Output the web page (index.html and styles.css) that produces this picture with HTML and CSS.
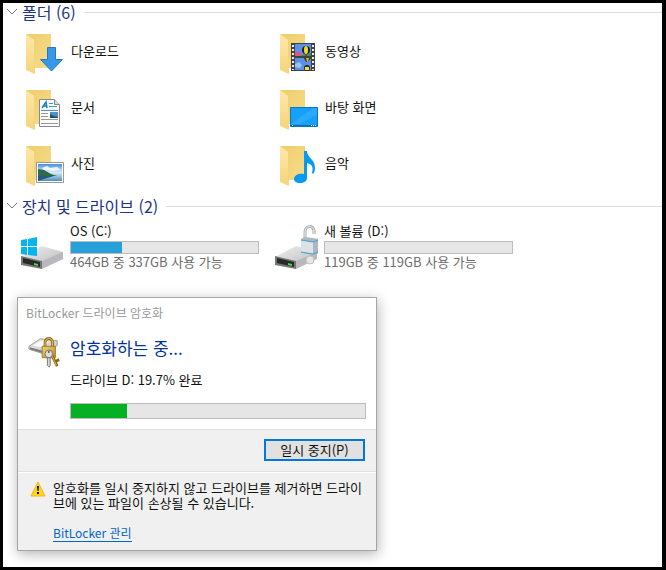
FILE: index.html
```html
<!DOCTYPE html>
<html lang="ko">
<head>
<meta charset="utf-8">
<title>내 PC</title>
<link rel="stylesheet" href="styles.css">
</head>
<body>
<svg class="defs" aria-hidden="true">
  <defs>
    <linearGradient id="back" x1="0" y1="0" x2="1" y2="1"><stop offset="0" stop-color="#efcd6b"/><stop offset="1" stop-color="#f7dc8c"/></linearGradient>
    <linearGradient id="flap" x1="0" y1="0" x2="0" y2="1"><stop offset="0" stop-color="#fde9a9"/><stop offset="1" stop-color="#f5d479"/></linearGradient>
    <linearGradient id="sky" x1="0" y1="0" x2="0" y2="1"><stop offset="0" stop-color="#4a8fe0"/><stop offset="0.5" stop-color="#d6ecf7"/><stop offset="1" stop-color="#4d8fba"/></linearGradient>
    <linearGradient id="metal" x1="0" y1="0" x2="1" y2="1"><stop offset="0" stop-color="#f0f0f0"/><stop offset="1" stop-color="#bcbcc0"/></linearGradient>
    <linearGradient id="gold" x1="0" y1="0" x2="1" y2="1"><stop offset="0" stop-color="#f2d67b"/><stop offset="1" stop-color="#b98719"/></linearGradient>
    <symbol id="folder" viewBox="0 0 40 44">
      <path fill="url(#back)" d="M1 1h25v34H9z"/>
      <path fill="url(#flap)" d="M1 1l8 6v26l1 2v6L1 37z"/>
    </symbol>
    <symbol id="disk" viewBox="0 0 44 48">
      <path fill="url(#metal)" d="M1 34L22 23l21 6-1 4-20 9z"/>
      <path fill="#b9b9bd" d="M22 38l21-9v7l-21 10z"/>
      <path fill="#777" d="M1 33l21 5v8L1 42z"/>
      <path fill="#262b28" d="M3 35l17 4v5L3 40z"/>
      <path fill="#45db4c" d="M14 40l4 1v2l-4-1z"/>
    </symbol>
  </defs>
</svg>
<main class="explorer">
  <section>
    <h2 class="group"><svg class="chevron" viewBox="0 0 12 8"><path d="M1 1l5 5 5-5"/></svg>폴더 (6)</h2>
    <ul class="folders">
      <li class="folder">
        <svg class="folder-icon" viewBox="0 0 40 44"><use href="#folder"/><path fill="#3499ea" stroke="#2677bd" d="M22.500 14.500h8v12h7L26.500 38 15.500 26.500h7z"/></svg>
        <span>다운로드</span>
      </li>
      <li class="folder">
        <svg class="folder-icon" viewBox="0 0 40 44"><use href="#folder"/>
          <path fill="#3f4245" d="M12 10h24v28H12z"/>
          <path stroke="#eee" stroke-width="2" stroke-dasharray="2 2" d="M14 12v25M34 12v25"/>
          <path fill="#5b91e8" d="M16 11h16v12H16zM16 25h16v12H16z"/>
          <path fill="#e9507d" d="M16 20l3-2 5 5h-8z"/><path fill="#2d9b48" d="M21 23l4-2 7-1v3z"/>
          <ellipse cx="27" cy="17" rx="4" ry="4" fill="#202020"/><ellipse cx="27" cy="17" rx="2" ry="4" fill="#f3d735"/><path fill="#9b3c28" d="M26 21h2v2h-2z"/>
          <path fill="#343022" d="M25 25h7l-3 4h-2z"/><path fill="#dcb52b" d="M27 25h3l-1 4h-1z"/>
          <circle cx="28" cy="35" r="3" fill="#272727"/><path fill="#f7dd2d" d="M26 34h4v3h-4z"/><path fill="#9bc3f4" d="M16 31l4-2 3 3-2 3-5-1z"/>
        </svg>
        <span>동영상</span>
      </li>
      <li class="folder">
        <svg class="folder-icon" viewBox="0 0 40 44"><use href="#folder"/>
          <path fill="#fafafa" stroke="#858a8d" d="M14.500 10.500h15l5 5v22h-20z"/><path fill="#ddd" stroke="#858a8d" d="M29.500 10.500v5h5"/>
          <path fill="none" stroke="#187fc0" stroke-width="1.500" d="M17 19l4-6 1 6M18 17h4"/><path stroke="#4696c9" d="M24 14.500h4M24 17.500h8M16 21.500h17"/>
          <path stroke="#999" d="M16 24.500h7M16 27.500h7M16 30.500h17M16 34.500h17"/><path fill="#4d93c8" d="M25 23h8v6h-8z"/><path fill="#23535b" d="M25 25l4 2 4 1v1h-8z"/>
        </svg>
        <span>문서</span>
      </li>
      <li class="folder">
        <svg class="folder-icon" viewBox="0 0 40 44"><use href="#folder"/>
          <path fill="#16a0fa" stroke="#0878bc" d="M11.500 18.500h27v19h-27z"/><path fill="#2ba9fb" d="M12 35L34 19h4v7L20 35z"/><path fill="#086eb2" d="M12 36h26v1H12z"/><path stroke="#e7f6ff" stroke-dasharray="1 1" d="M13 36.500h2M32 36.500h5"/>
        </svg>
        <span>바탕 화면</span>
      </li>
      <li class="folder">
        <svg class="folder-icon" viewBox="0 0 40 44"><use href="#folder"/>
          <path fill="#fff" stroke="#999" d="M11.500 17.500h27v20h-27z"/><path fill="url(#sky)" d="M13 19h24v17H13z"/><path fill="#edf8fc" d="M17 23l5-2 3 2 7-1 4 3-8 1-9-1z"/>
          <path fill="#2f684b" d="M13 24l6 1 7 4 6 2H13z"/><path fill="#285b7b" d="M13 31h16l-7 2-9 3z"/>
        </svg>
        <span>사진</span>
      </li>
      <li class="folder">
        <svg class="folder-icon" viewBox="0 0 40 44"><use href="#folder"/>
          <path fill="#0899f0" d="M25 6h3c0 7 8 8 8 17 0 3-1 5-2 6l-1-1c2-7-1-9-5-10v15c0 3-3 5-7 5-4 0-6-2-6-4 0-4 5-6 10-5z"/>
        </svg>
        <span>음악</span>
      </li>
    </ul>
  </section>
  <section>
    <h2 class="group group-drives"><svg class="chevron" viewBox="0 0 12 8"><path d="M1 1l5 5 5-5"/></svg>장치 및 드라이브 (2)</h2>
    <ul class="drives">
      <li class="drive">
        <svg class="drive-icon" viewBox="0 0 44 48"><use href="#disk"/><path fill="#04b5ef" d="M1 17l6-1v7H1zM8 16l9-2v9H8zM1 24h6v8l-6-1zM8 24h9v9l-9-1z"/></svg>
        <div class="drive-info">
          <label for="drive-c">OS (C:)</label>
          <progress class="meter usage" id="drive-c" value="27.500" max="100"></progress>
          <span class="free">464GB 중 337GB 사용 가능</span>
        </div>
      </li>
      <li class="drive">
        <svg class="drive-icon" viewBox="0 0 44 48"><use href="#disk"/>
          <circle cx="36" cy="37" r="4" fill="#e3e5e7" stroke="#bfc2c5"/><path fill="none" stroke="#aab0b5" stroke-width="3" d="M31 15V9c0-7 9-7 9-1v3"/><path fill="none" stroke="#eef1f3" d="M31 15V9c0-7 9-7 9-1v3"/>
          <path fill="#aeb6c0" d="M27 16l4-2 14 2v14l-5 2-13-2z"/><path fill="#dde2e8" d="M27 17l12 2v12l-12-2z"/><path fill="none" stroke="#4aa0cc" d="M27 17l12 2 5-2M27 29l12 2 5-2"/>
        </svg>
        <div class="drive-info">
          <label for="drive-d">새 볼륨 (D:)</label>
          <progress class="meter usage" id="drive-d" value="0" max="100"></progress>
          <span class="free">119GB 중 119GB 사용 가능</span>
        </div>
      </li>
    </ul>
  </section>
  <section class="dialog" role="dialog" aria-labelledby="dialog-title">
    <h3 class="dialog-title" id="dialog-title">BitLocker 드라이브 암호화</h3>
    <div class="dialog-body">
      <svg class="lock-icon" viewBox="0 0 36 36">
        <path fill="url(#metal)" stroke="#999" d="M1 11L13 3l18 2v5l-14 9-16-5z"/><path fill="#777a7d" d="M2 12l14 4v2L2 14z"/><path fill="#fafafa" d="M5 10l9-5 9 1-9 6z"/>
        <path fill="none" stroke="#987018" stroke-width="3" d="M18 13V8c0-7 8-7 8-1v6"/><path fill="none" stroke="#e6c668" d="M18 13V8c0-7 8-7 8-1v6"/>
        <path fill="url(#gold)" stroke="#a37a20" d="M15 11h14v12H15z"/>
        <path fill="none" stroke="#8e6612" stroke-width="3" d="M25 20l6 12M29 27l4-2"/><path fill="none" stroke="#e1b844" d="M25 20l5 11"/>
        <circle cx="22" cy="19" r="4" fill="#dedede" stroke="#747474"/><circle cx="22" cy="17" r="1" fill="#555"/><path fill="#d6d6d6" stroke="#747474" d="M20.500 23h3v8l-1 2-2-2z"/>
      </svg>
      <div class="status">
        <h4 class="heading">암호화하는 중...</h4>
        <label class="progress-label" for="encryption">드라이브 D: 19.7% 완료</label>
        <progress class="meter encryption" id="encryption" value="19.200" max="100"></progress>
      </div>
    </div>
    <div class="actions"><button class="pause" type="button">일시 중지(P)</button></div>
    <div class="notice">
      <svg class="warning-icon" viewBox="0 0 16 16"><path fill="#ffd51c" stroke="#efb51c" stroke-linejoin="round" d="M8 1l7 14H1z"/><path fill="#111" d="M7 5h2l-.4 5H7.400zM7 11h2v2H7z"/></svg>
      <div>
        <p class="warning">암호화를 일시 중지하지 않고 드라이브를 제거하면 드라이브에 있는 파일이 손상될 수 있습니다.</p>
        <a class="manage" href="#">BitLocker 관리</a>
      </div>
    </div>
  </section>
</main>
</body>
</html>
```
FILE: styles.css
```css
* {
  box-sizing: border-box;
}

body {
  margin: 0;
  background: #fff;
  color: #111;
  font: 13px/16px "Noto Sans CJK KR", "Noto Sans", sans-serif;
}

h2, h3, h4, p, ul {
  margin: 0;
  padding: 0;
  font-weight: 400;
  list-style: none;
}

svg {
  display: block;
  flex: none;
}

.defs {
  position: absolute;
  width: 0;
  height: 0;
}

.explorer {
  min-height: 100vh;
  padding-bottom: 8px;
  border: 3px solid #000;
  border-right-width: 4px;
}

.group {
  display: flex;
  align-items: center;
  padding-left: 3px;
  color: #1e3287;
  font-size: 16px;
  line-height: 18px;
}

.group::after {
  content: "";
  flex: 1;
  height: 1px;
  margin-left: 8px;
  background: #dedede;
}

.group-drives {
  line-height: 22px;
}

.chevron {
  width: 12px;
  height: 8px;
  margin-right: 4px;
  fill: none;
  stroke: #777;
}

.folders, .drives {
  display: grid;
  grid-template-columns: repeat(auto-fill, 254px);
}

.folders {
  padding: 6px 0 0 22px;
}

.folder {
  display: flex;
  gap: 6px;
  padding: 6px 0;
  line-height: 36px;
}

.folder-icon {
  width: 40px;
  height: 44px;
}

.drives {
  padding: 6px 0 0 17px;
}

.drive {
  display: flex;
  gap: 6px;
}

.drive-icon {
  width: 44px;
  height: 48px;
}

.drive-info {
  display: grid;
  grid-template-rows: 16px 15px 16px;
}

.free {
  color: #6d6d6d;
}

.meter {
  display: block;
  border: 1px solid #bcbcbc;
  background: #e6e6e6;
  appearance: none;
}

.meter::-webkit-progress-bar {
  background: #e6e6e6;
}

.usage {
  align-self: end;
  width: 189px;
  height: 13px;
}

.usage::-webkit-progress-value {
  background: #26a0da;
}

.dialog {
  max-width: 360px;
  margin: 26px 0 0 14px;
  border: 1px solid #a5a5a5;
  background: #f0f0f0;
  box-shadow: 1px 3px 12px rgb(0 0 0 / 30%);
}

.dialog-title {
  padding: 6px 8px;
  background: #fff;
  color: #999;
  font-size: 12px;
  line-height: 18px;
}

.dialog-body {
  display: flex;
  gap: 8px;
  padding: 8px 10px 10px;
  background: #fff;
}

.lock-icon {
  width: 34px;
  height: 34px;
}

.status {
  flex: 1;
}

.heading {
  color: #003399;
  font-size: 17px;
  line-height: 24px;
}

.progress-label {
  display: block;
  margin: 12px 0 15px;
}

.encryption {
  width: 100%;
  height: 16px;
}

.encryption::-webkit-progress-value {
  background: #06b025;
}

.actions {
  display: flex;
  justify-content: flex-end;
  padding: 9px 11px 10px;
  border-top: 1px solid #dfdfdf;
  border-bottom: 1px solid #dfdfdf;
}

.pause {
  min-width: 101px;
  height: 22px;
  padding: 0;
  border: 2px solid #0078d7;
  background: #e1e1e1;
  color: #111;
  font: inherit;
}

.notice {
  display: flex;
  gap: 7px;
  padding: 7px 11px 8px 12px;
  border-top: 1px solid #fff;
}

.warning-icon {
  width: 16px;
  height: 16px;
  margin-top: 1px;
}

.warning {
  margin-bottom: 15px;
  line-height: 15px;
}

.manage {
  display: inline-block;
  border-bottom: 1px solid #0066cc;
  color: #0066cc;
  font-size: 12px;
  line-height: 16px;
  text-decoration: none;
}
```
